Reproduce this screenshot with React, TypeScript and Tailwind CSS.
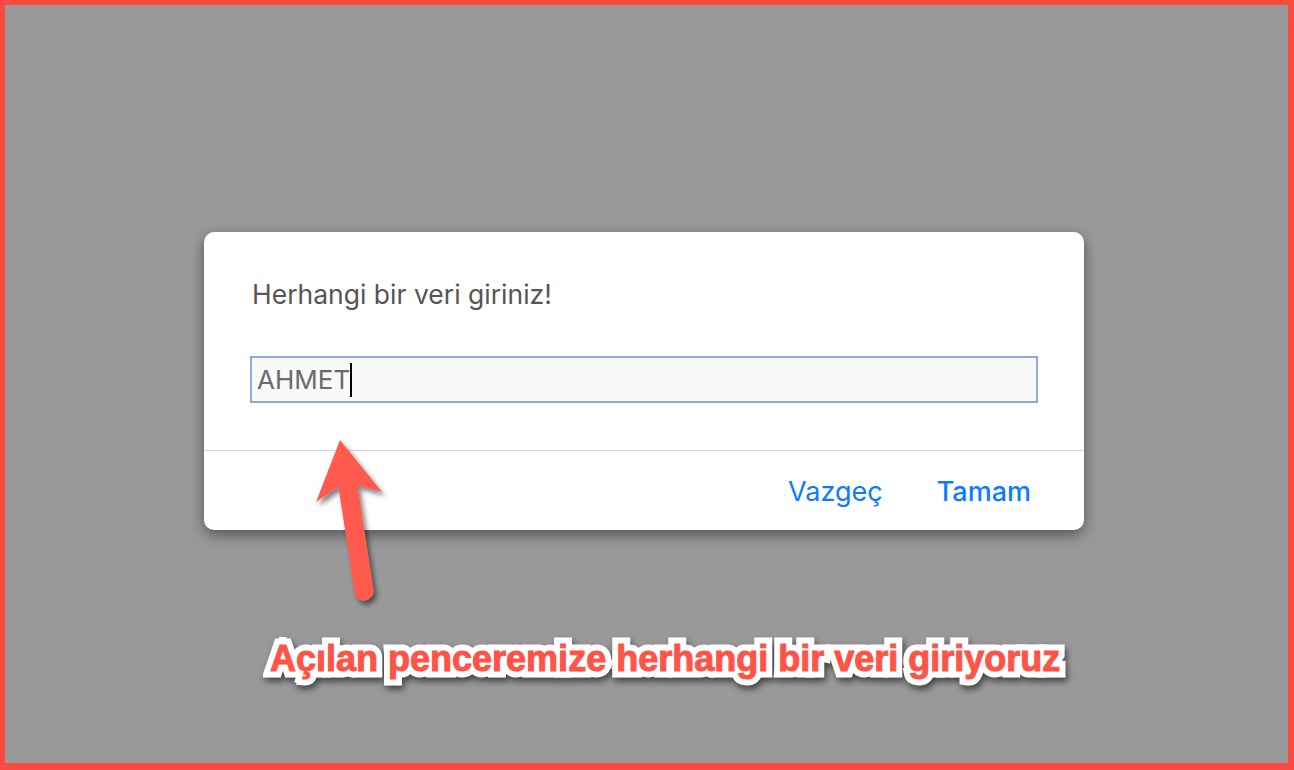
export default function App() {
  return (
    <div className="relative w-[1294px] h-[770px] bg-[#999999] border-solid border-[#fd4a41] border-t-[5px] border-l-[5px] border-r-[6px] border-b-[7px] overflow-hidden">
      <div className="ml-[199px] mt-[227px] w-[880px] h-[298px] bg-white rounded-[10px] shadow-[0_5px_14px_rgba(0,0,0,0.45)] flex flex-col font-['Inter',sans-serif]">
        <div className="px-[46px] pt-[46px]">
          <div className="pl-[2px] text-[26.5px] leading-[32px] text-[#555555]">Herhangi bir veri giriniz!</div>
          <div className="mt-[46px] h-[47px] border-2 border-[#90a9d8] bg-[#f9f9f9] flex items-center pl-[5px]">
            <span className="text-[26px] leading-[32px] text-[#6b6b6b]">AHMET</span>
            <span className="w-[2px] h-[34px] bg-black"></span>
          </div>
        </div>
        <div className="mt-[47px] h-px bg-[#d6d6d6]"></div>
        <div className="flex-1 flex items-center justify-end gap-[54px] pr-[53px] pt-[3px] text-[27px] text-[#0b7bff]">
          <span>Vazgeç</span>
          <span className="font-medium">Tamam</span>
        </div>
      </div>

      <div className="mt-[108px] ml-[265px] grid w-max font-['Liberation_Sans',Arial,sans-serif] font-bold text-[36px] leading-[42px]">
        <span className="col-start-1 row-start-1 text-white [-webkit-text-stroke:13px_white] [filter:drop-shadow(2px_4px_3px_rgba(0,0,0,0.55))]">Açılan penceremize herhangi bir veri giriyoruz</span>
        <span className="relative col-start-1 row-start-1 text-[#fe5448] [-webkit-text-stroke:1px_#fe5448]">Açılan penceremize herhangi bir veri giriyoruz</span>
      </div>

      <svg className="absolute left-[-5px] top-[-5px] pointer-events-none" width="1294" height="770" viewBox="0 0 1294 770">
        <defs>
          <filter id="sh" x="-50%" y="-50%" width="200%" height="200%">
            <feDropShadow dx="3" dy="4" stdDeviation="2.5" floodColor="#000" floodOpacity="0.5" />
          </filter>
        </defs>
        <g filter="url(#sh)" fill="#ff5a4e">
          <line x1="347" y1="480" x2="364" y2="591" stroke="#ff5a4e" strokeWidth="19" strokeLinecap="round" />
          <polygon points="340,440 382,492 357,485 338,487 316,502" />
        </g>
      </svg>
    </div>
  );
}
